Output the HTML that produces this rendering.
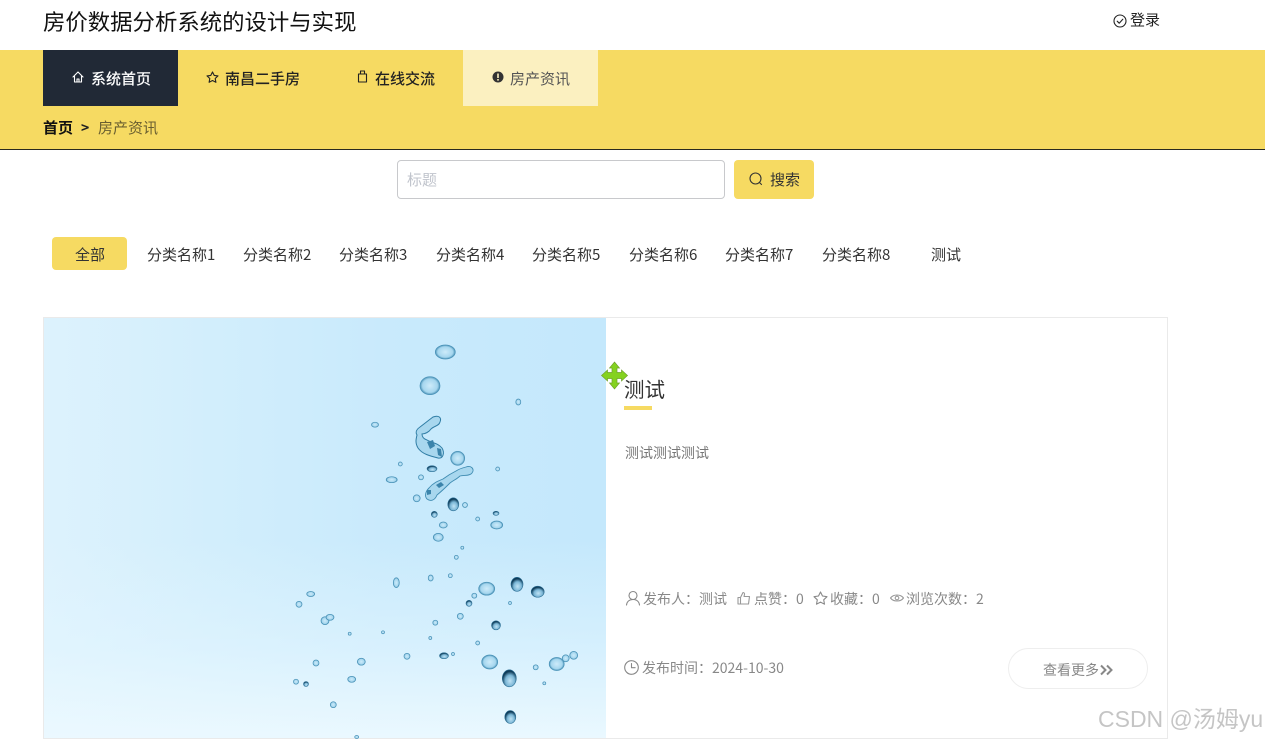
<!DOCTYPE html>
<html lang="zh-CN"><head><meta charset="utf-8"><title>房产资讯</title>
<style>
*{box-sizing:border-box;margin:0;padding:0}
html,body{width:1265px;height:740px;overflow:hidden;background:#fff}
body{position:relative;font-family:"Noto Sans CJK SC","Liberation Sans",sans-serif;color:#333}
.a{position:absolute;white-space:nowrap}
svg.i{position:absolute;fill:none;stroke:currentColor;stroke-width:1.1;stroke-linecap:round;stroke-linejoin:round}
.tab{position:absolute;top:245px;font-size:15px;line-height:20px;color:#333;white-space:nowrap}
.nav{position:absolute;top:50px;height:56px;width:135px}
.nav span{position:absolute;top:19px;font-size:15px;line-height:20px;white-space:nowrap}
.g{color:#888;font-size:14px;line-height:18px}
</style></head><body>
<div class="a" style="left:43px;top:5px;font-size:22.400px;line-height:32px;color:#111">房价数据分析系统的设计与实现</div>
<svg class="i" style="left:1113px;top:14px;color:#222" width="14" height="14" viewBox="0 0 14 14"><circle cx="7" cy="7" r="6"/><path d="M4.200 7.200l2 2 3.600-4"/></svg>
<div class="a" style="left:1130px;top:10px;font-size:15px;line-height:20px;color:#222">登录</div>

<div class="a" style="left:0;top:50px;width:1265px;height:100px;background:#f6da62;border-bottom:1px solid #2a2a1e"></div>
<div class="nav" style="left:43px;background:#212936;color:#fff;font-weight:500">
<svg class="i" style="left:29px;top:21px" width="12" height="12" viewBox="0 0 12 12"><path d="M1 6l5-5 5 5M2.500 5v6h7V5M5 11V8h2v3"/></svg><span style="left:48px">系统首页</span></div>
<div class="nav" style="left:178px;width:150px;color:#222;font-weight:500">
<svg class="i" style="left:28px;top:21px" width="13" height="12" viewBox="0 0 13 12"><path d="M6.500 1l1.700 3.400 3.800.5-2.800 2.600.7 3.800-3.400-1.800-3.400 1.800.7-3.800L1 4.900l3.800-.5z"/></svg><span style="left:47px">南昌二手房</span></div>
<div class="nav" style="left:328px;color:#222;font-weight:500">
<svg class="i" style="left:29px;top:20px" width="11" height="13" viewBox="0 0 11 13"><path d="M1.500 4h8v8h-8zM3.500 4V1h4v3"/></svg><span style="left:47px">在线交流</span></div>
<div class="nav" style="left:463px;background:#fbf0c0;color:#555">
<svg style="position:absolute;left:29px;top:21px" width="12" height="12" viewBox="0 0 12 12"><circle cx="6" cy="6" r="5.500" fill="#333"/><rect x="5.200" y="2.500" width="1.600" height="4.500" fill="#fbf0c0"/><rect x="5.200" y="8" width="1.600" height="1.600" fill="#fbf0c0"/></svg><span style="left:47px">房产资讯</span></div>
<div class="a" style="left:43px;top:118px;font-size:15px;line-height:20px;font-weight:700;color:#111">首页</div>
<div class="a" style="left:81px;top:118px;font-size:14px;line-height:20px;font-weight:700;color:#222">&gt;</div>
<div class="a" style="left:98px;top:118px;font-size:15px;line-height:20px;color:#6a5f30">房产资讯</div>

<div class="a" style="left:397px;top:160px;width:328px;height:39px;border:1px solid #c8c9cc;border-radius:4px;background:#fff"></div>
<div class="a" style="left:407px;top:170px;font-size:15px;line-height:20px;color:#c0c4cc">标题</div>
<div class="a" style="left:734px;top:160px;width:80px;height:39px;background:#f6da62;border-radius:4px"></div>
<svg class="i" style="left:749px;top:172px;color:#333" width="14" height="14" viewBox="0 0 14 14"><circle cx="6.500" cy="6.500" r="5.500"/><path d="M10.500 10.500l2 2"/></svg>
<div class="a" style="left:770px;top:170px;font-size:15px;line-height:20px;color:#333">搜索</div>

<div class="a" style="left:52px;top:237px;width:75px;height:33px;background:#f6da62;border-radius:4px"></div>
<div class="tab" style="left:75px">全部</div>
<div class="tab" style="left:147px">分类名称1</div>
<div class="tab" style="left:243px">分类名称2</div>
<div class="tab" style="left:339px">分类名称3</div>
<div class="tab" style="left:436px">分类名称4</div>
<div class="tab" style="left:532px">分类名称5</div>
<div class="tab" style="left:629px">分类名称6</div>
<div class="tab" style="left:725px">分类名称7</div>
<div class="tab" style="left:822px">分类名称8</div>
<div class="tab" style="left:931px">测试</div>

<div class="a" style="left:43px;top:317px;width:1125px;height:422px;border:1px solid #eaeaea"></div>
<div class="a" style="left:44px;top:318px;width:562px;height:420px;background:linear-gradient(90deg,#ddf2fd 0%,#d2eefc 30%,#c9eafc 60%,#c4e8fc 100%)"></div>
<div class="a" style="left:44px;top:540px;width:562px;height:198px;background:linear-gradient(180deg,rgba(228,246,255,0),rgba(228,246,255,.55) 55%,rgba(236,249,255,.95))"></div>
<svg class="a" style="left:0;top:0" width="620" height="740" viewBox="0 0 620 740">
<defs>
<radialGradient id="d" cx="50%" cy="50%" r="50%"><stop offset="0" stop-color="#cdebfa"/><stop offset=".75" stop-color="#a5d6ee"/><stop offset="1" stop-color="#4c93b8"/></radialGradient>
<radialGradient id="k" cx="55%" cy="65%" r="55%"><stop offset="0" stop-color="#c0e3f5"/><stop offset=".6" stop-color="#7ab6d6"/><stop offset="1" stop-color="#0e3b58"/></radialGradient>
</defs>
<g fill="url(#d)" stroke="#4a93b8" stroke-width=".7">
<ellipse cx="445.300" cy="352" rx="10" ry="7"/><ellipse cx="430" cy="385.700" rx="10" ry="9"/>
<ellipse cx="518.300" cy="402" rx="2.500" ry="3"/><ellipse cx="375" cy="424.700" rx="3.500" ry="2.500"/>
</g>
<path d="M433 417c5-2 9 0 7 5-1 4-6 4-9 7-2 3-6 5-9 5 0 3 2 5 5 6 5 3 11 3 15 8 3 5 1 11-4 10-8-2-16-4-20-10-3-5-2-9-1-13-2-3 0-6 3-8 4-3 9-7 13-10z" fill="#a8d7ee" stroke="#2f7da5" stroke-width="1"/>
<path d="M427 442l6-2 2 6-5 3zM437 448l4 1 1 8-4-2z" fill="#3b84ab"/>
<path d="M466 467c5-2 9 2 6 6-2 3-8 2-12 3-3 3-6 4-10 7-4 4-8 8-13 12-2 5-6 7-10 4-3-3-1-8 2-11 4-5 9-7 14-9 4-3 9-6 13-8 3-2 6-3 10-4z" fill="#a8d7ee" stroke="#3f8cb2" stroke-width=".9"/>
<path d="M436 485l5-3 3 3-5 3zM427 490l4 0 0 4-4 1z" fill="#3b84ab"/>
<g fill="url(#d)" stroke="#4a93b8" stroke-width=".7">
<ellipse cx="457.700" cy="458.300" rx="7" ry="7"/><ellipse cx="400.300" cy="464" rx="2" ry="2"/><ellipse cx="497.700" cy="469" rx="2" ry="2"/>
<ellipse cx="421" cy="477.300" rx="2.500" ry="2.500"/><ellipse cx="391.700" cy="479.700" rx="5.500" ry="3"/>
<ellipse cx="416.700" cy="498.300" rx="3.500" ry="3.500"/><ellipse cx="465" cy="505" rx="2.500" ry="2.500"/>
<ellipse cx="443.300" cy="525" rx="4" ry="3"/><ellipse cx="438.300" cy="537.300" rx="5" ry="4"/><ellipse cx="477.700" cy="519" rx="2" ry="2"/>
<ellipse cx="496.700" cy="525" rx="6" ry="4"/><ellipse cx="396.300" cy="582.700" rx="3" ry="5"/><ellipse cx="430.700" cy="578" rx="2.500" ry="3"/>
<ellipse cx="450.300" cy="575.700" rx="2" ry="2"/><ellipse cx="456.300" cy="557.300" rx="2" ry="2"/><ellipse cx="462.300" cy="547.700" rx="1.500" ry="1.500"/>
<ellipse cx="486.700" cy="588.700" rx="8" ry="6.500"/><ellipse cx="474.300" cy="595.700" rx="2.500" ry="2.500"/><ellipse cx="510" cy="603" rx="1.500" ry="1.500"/>
<ellipse cx="460.300" cy="616.300" rx="3" ry="3"/><ellipse cx="435.300" cy="622.700" rx="2.500" ry="2.500"/><ellipse cx="430.300" cy="638" rx="1.500" ry="1.500"/>
<ellipse cx="477.700" cy="643" rx="2" ry="2"/><ellipse cx="453" cy="654" rx="1.500" ry="1.500"/><ellipse cx="407" cy="656.300" rx="3" ry="3"/>
<ellipse cx="489.700" cy="662" rx="8" ry="7"/><ellipse cx="556.700" cy="664" rx="7.500" ry="6.500"/><ellipse cx="565.700" cy="658.300" rx="3.500" ry="3.500"/><ellipse cx="573.700" cy="655.300" rx="4" ry="4"/>
<ellipse cx="535.700" cy="667.300" rx="2.500" ry="2.500"/><ellipse cx="544.300" cy="683.300" rx="1.500" ry="1.500"/>
<ellipse cx="361.300" cy="661.700" rx="4" ry="3.500"/><ellipse cx="351.700" cy="679.300" rx="4" ry="3"/><ellipse cx="316" cy="663" rx="3" ry="3"/><ellipse cx="296" cy="681.700" rx="2.500" ry="2.500"/>
<ellipse cx="333.300" cy="704.700" rx="3" ry="3"/><ellipse cx="310.700" cy="594" rx="4" ry="2.500"/><ellipse cx="299" cy="604.300" rx="3" ry="3"/>
<ellipse cx="325" cy="620.700" rx="4" ry="4"/><ellipse cx="330" cy="617.300" rx="4" ry="3"/><ellipse cx="349.700" cy="633.700" rx="1.500" ry="1.500"/><ellipse cx="383" cy="632.300" rx="1.500" ry="1.500"/><ellipse cx="356.700" cy="737" rx="2" ry="1.500"/>
</g>
<g fill="url(#k)" stroke="#2c7096" stroke-width=".6">
<ellipse cx="432" cy="468.700" rx="5" ry="3"/><ellipse cx="453.300" cy="504.300" rx="5.500" ry="6.500"/><ellipse cx="434.300" cy="514.300" rx="3" ry="3"/><ellipse cx="496" cy="513.300" rx="3" ry="2"/>
<ellipse cx="469" cy="603.300" rx="3" ry="3"/><ellipse cx="517" cy="584.300" rx="6" ry="7"/><ellipse cx="537.700" cy="591.700" rx="6.500" ry="5.500"/>
<ellipse cx="496" cy="625.300" rx="4.500" ry="4.500"/><ellipse cx="444" cy="655.700" rx="4.500" ry="3"/><ellipse cx="509.300" cy="678.300" rx="7" ry="8.500"/>
<ellipse cx="510.300" cy="717" rx="5.500" ry="6.500"/><ellipse cx="306" cy="684" rx="2.500" ry="2.500"/>
</g>
</svg>

<svg class="a" style="left:600px;top:361px" width="29" height="29" viewBox="0 0 29 29"><path d="M14.500 1l5 6h-2.500v4.500h4.500V9l6 5.500-6 5.500v-2.500H17V22h2.500l-5 6-5-6H12v-4.500H7.500V20l-6-5.500 6-5.500v2.500H12V7H9.500z" fill="#84d21f" stroke="#6fa32a" stroke-width=".7"/></svg>

<div class="a" style="left:624px;top:374px;font-size:20.500px;line-height:29px;color:#333">测试</div>
<div class="a" style="left:624px;top:406px;width:28px;height:4px;background:#f6da62"></div>
<div class="a" style="left:625px;top:443px;font-size:14px;line-height:20px;color:#777">测试测试测试</div>

<svg class="i" style="left:625px;top:590px;color:#888" width="16" height="16" viewBox="0 0 16 16"><circle cx="8" cy="5.500" r="4"/><path d="M1.500 15c.5-3.500 3-5.500 6.500-5.500s6 2 6.500 5.500"/></svg>
<div class="a g" style="left:643px;top:590px">发布人：测试</div>
<svg class="i" style="left:737px;top:591px;color:#999" width="14" height="14" viewBox="0 0 14 14"><path d="M1 6.500h2.500V13H1zM3.500 6.500L6 1.500c1.200 0 1.700 1 1.500 2L7 5.500h5.500l-1 7.500h-8"/></svg>
<div class="a g" style="left:754px;top:590px">点赞：0</div>
<svg class="i" style="left:813px;top:591px;color:#888" width="15" height="14" viewBox="0 0 15 14"><path d="M7.500 1l2 4 4.500.7-3.300 3.100.8 4.400-4-2.100-4 2.100.8-4.400L1 5.700 5.500 5z"/></svg>
<div class="a g" style="left:830px;top:590px">收藏：0</div>
<svg class="i" style="left:890px;top:593px;color:#999" width="14" height="10" viewBox="0 0 14 10"><path d="M.5 5C3.500 1 10.500 1 13.500 5 10.500 9 3.500 9 .5 5z"/><circle cx="7" cy="5" r="1.800"/></svg>
<div class="a g" style="left:906px;top:590px">浏览次数：2</div>

<svg class="i" style="left:624px;top:660px;color:#888" width="15" height="15" viewBox="0 0 15 15"><circle cx="7.500" cy="7.500" r="6.800"/><path d="M7.500 3.500v4.200h3.600"/></svg>
<div class="a g" style="left:642px;top:659px">发布时间：2024-10-30</div>
<div class="a" style="left:1008px;top:648px;width:140px;height:41px;border:1px solid #eeeeee;border-radius:21px;background:#fff"></div>
<div class="a g" style="left:1043px;top:661px">查看更多</div>
<svg class="a" style="left:1100px;top:664px" width="13" height="12" viewBox="0 0 13 12" fill="none" stroke="#888" stroke-width="2"><path d="M1 1.500L5.500 6 1 10.500M7 1.500L11.500 6 7 10.500"/></svg>
<div class="a" style="left:1098px;top:703px;font-size:23px;line-height:32px;font-family:'Liberation Sans','Noto Sans CJK SC',sans-serif;color:rgba(150,150,150,.55)">CSDN @汤姆yu</div>
</body></html>
